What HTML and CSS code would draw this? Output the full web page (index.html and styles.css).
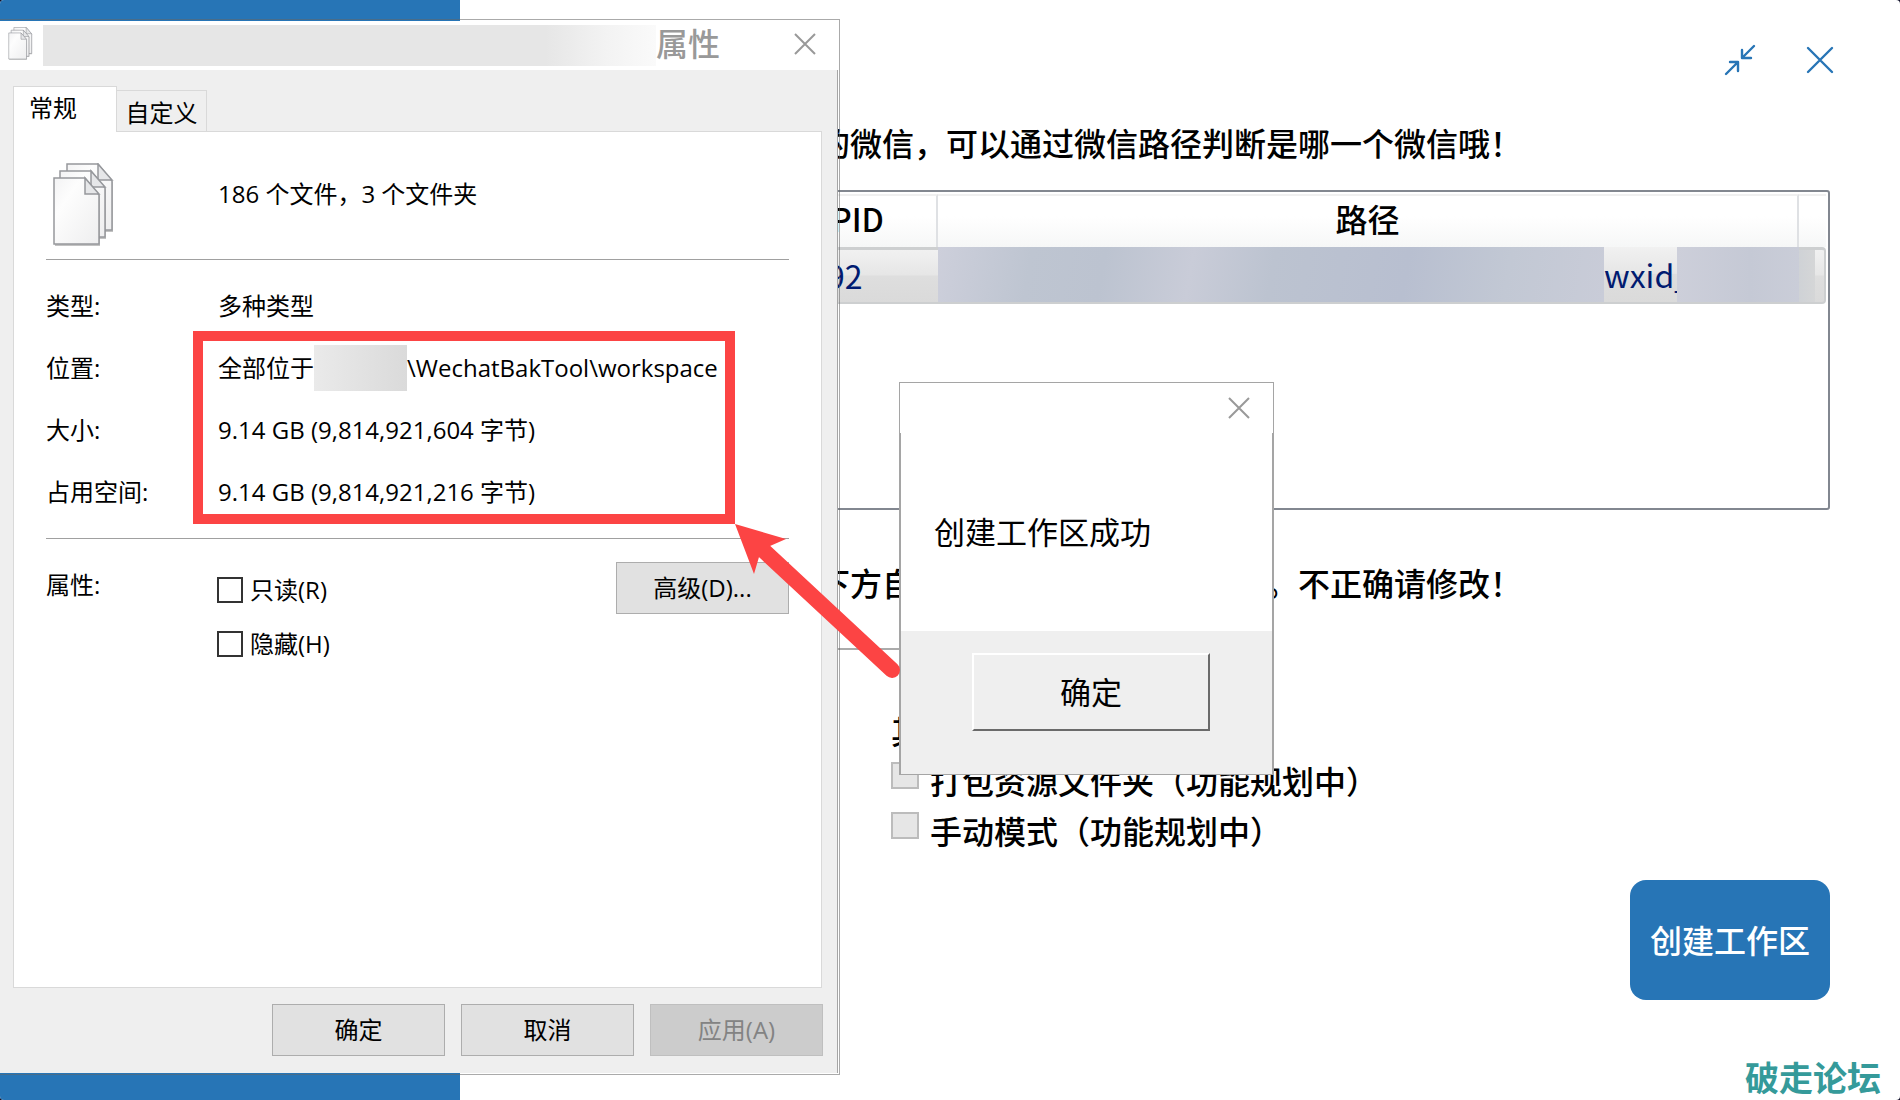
FILE: index.html
```html
<!DOCTYPE html>
<html lang="zh-CN">
<head>
    <meta charset="UTF-8">
    <meta name="viewport" content="width=device-width, initial-scale=1.0">
    <title>创建工作区</title>
    <link rel="stylesheet" href="styles.css">
</head>
<body>
    <div class="app">
        <aside class="sidebar"></aside>
        <main class="main">
            <div class="window-tools">
                <button type="button" class="tool-btn" aria-label="最小化">
                    <svg width="32" height="32" viewBox="0 0 32 32" fill="none" stroke="currentColor" stroke-width="2.4" stroke-linecap="round" stroke-linejoin="round">
                        <path d="M30 2 18 14M18 6v8h9M2 30 14 18M14 27v-9H6"/>
                    </svg>
                </button>
                <button type="button" class="tool-btn" aria-label="关闭">
                    <svg width="32" height="32" viewBox="0 0 32 32" fill="none" stroke="currentColor" stroke-width="2.4" stroke-linecap="round">
                        <path d="M4 4 28 28M28 4 4 28"/>
                    </svg>
                </button>
            </div>

            <p class="hint">的微信，可以通过微信路径判断是哪一个微信哦！</p>

            <div class="process-list">
                <table>
                    <thead>
                        <tr>
                            <th class="col-pid">PID</th>
                            <th>路径</th>
                            <th class="col-end"></th>
                        </tr>
                    </thead>
                    <tbody>
                        <tr>
                            <td class="col-pid">92</td>
                            <td class="path">
                                <div class="path-row">
                                    <span class="mask mask-path"></span>
                                    <span class="wxid">wxid_</span>
                                    <span class="mask mask-id"></span>
                                </div>
                            </td>
                            <td class="col-end"><span class="mask mask-end"></span></td>
                        </tr>
                    </tbody>
                </table>
            </div>

            <p class="hint hint-split"><span>下方自</span><span>。不正确请修改！</span></p>
            <input type="text" class="line-input" aria-label="路径">

            <div class="options">
                <div class="options-title">其</div>
                <label class="option"><input type="checkbox" disabled>打包资源文件夹（功能规划中）</label>
                <label class="option"><input type="checkbox" disabled>手动模式（功能规划中）</label>
            </div>

            <button type="button" class="create-btn">创建工作区</button>
        </main>
    </div>

    <!-- File properties window -->
    <section class="props">
        <header class="titlebar">
            <svg class="file-icon" width="28" height="34" viewBox="0 0 64 86">
                <use href="#files"/>
            </svg>
            <span class="title-mask"></span>
            <h1>属性</h1>
            <button type="button" class="close-btn" aria-label="关闭">
                <svg width="22" height="22" viewBox="0 0 22 22" fill="none" stroke="currentColor" stroke-width="2">
                    <path d="M1 1 21 21M21 1 1 21"/>
                </svg>
            </button>
        </header>
        <div class="props-body">
            <nav class="tabs">
                <button type="button" class="tab active">常规</button>
                <button type="button" class="tab">自定义</button>
            </nav>
            <div class="panel">
                <div class="summary">
                    <svg width="64" height="86" viewBox="0 0 64 86">
                        <defs>
                            <linearGradient id="paper" x1="0" y1="0" x2="1" y2="1">
                                <stop offset="0" stop-color="#f3f3f4"/>
                                <stop offset="0.3" stop-color="#fdfdfd"/>
                                <stop offset="1" stop-color="#eeeeef"/>
                            </linearGradient>
                            <g id="sheet">
                                <path d="M2 16h31l14 17v50H2z" fill="#777" opacity=".45"/>
                                <path d="M1 15h31l14 17v49H1z" fill="url(#paper)" stroke="#96989c" stroke-width="1.5"/>
                                <path d="M32 15v16h14z" fill="#e6e7e9" stroke="#96989c" stroke-width="1.5"/>
                            </g>
                            <g id="files">
                                <use href="#sheet" x="13" y="-14"/>
                                <use href="#sheet" x="6" y="-7"/>
                                <use href="#sheet"/>
                            </g>
                        </defs>
                        <use href="#files"/>
                    </svg>
                    <span>186 个文件，3 个文件夹</span>
                </div>
                <dl class="details">
                    <dt>类型:</dt>
                    <dd>多种类型</dd>
                    <dt>位置:</dt>
                    <dd>全部位于<span class="location-mask"></span>\WechatBakTool\workspace</dd>
                    <dt>大小:</dt>
                    <dd>9.14 GB (9,814,921,604 字节)</dd>
                    <dt>占用空间:</dt>
                    <dd>9.14 GB (9,814,921,216 字节)</dd>
                </dl>
                <div class="attributes">
                    <div class="attr-name">属性:</div>
                    <div class="attr-checks">
                        <label><input type="checkbox">只读(R)</label>
                        <label><input type="checkbox">隐藏(H)</label>
                    </div>
                    <button type="button" class="win-btn">高级(D)...</button>
                </div>
            </div>
            <footer class="props-actions">
                <button type="button" class="win-btn">确定</button>
                <button type="button" class="win-btn">取消</button>
                <button type="button" class="win-btn" disabled>应用(A)</button>
            </footer>
        </div>
    </section>

    <!-- Message box -->
    <section class="message" role="dialog">
        <header class="message-bar">
            <button type="button" class="close-btn" aria-label="关闭">
                <svg width="22" height="22" viewBox="0 0 22 22" fill="none" stroke="currentColor" stroke-width="2">
                    <path d="M1 1 21 21M21 1 1 21"/>
                </svg>
            </button>
        </header>
        <p class="message-text">创建工作区成功</p>
        <footer class="message-actions">
            <button type="button" class="message-btn">确定</button>
        </footer>
    </section>

    <!-- Annotations -->
    <div class="highlight"></div>
    <svg class="arrow" width="170" height="160" viewBox="0 0 170 160">
        <path d="M28 26 157 146" stroke="#fc4444" stroke-width="16" stroke-linecap="round"/>
        <path d="M0 0 51 15 35 22 24 33 19 50z" fill="#fc4444"/>
    </svg>
    <div class="watermark">破走论坛</div>
</body>
</html>
```
FILE: styles.css
```css
* {
    box-sizing: border-box;
}
body {
    margin: 0;
    position: relative;
    min-height: 100vh;
    background-color: #10102a;
    color: #000;
    font-family: "Noto Sans CJK SC", sans-serif;
    font-size: 32px;
    line-height: 40px;
    overflow: hidden;
}
button,
input {
    font: inherit;
    color: inherit;
    margin: 0;
}
button {
    padding: 0;
    border: none;
    background: none;
}
svg {
    display: block;
}
p,
h1,
dl,
dd {
    margin: 0;
}

/* Main window */
.app {
    display: flex;
    min-height: 100vh;
    background-color: #fff;
    border-radius: 4px;
    font-weight: 500;
    overflow: hidden;
}
.sidebar {
    flex: 0 0 460px;
    background-color: #2775b6;
}
.main {
    flex: 1;
    display: flex;
    flex-direction: column;
    padding: 0 70px 100px 358px;
}
.window-tools {
    display: flex;
    justify-content: flex-end;
    gap: 48px;
    height: 122px;
    padding-top: 44px;
    margin-right: -6px;
}
.tool-btn {
    width: 32px;
    height: 32px;
    color: #2775b6;
}
.hint {
    white-space: nowrap;
}
.hint-split {
    display: flex;
    gap: 352px;
    margin-top: 52px;
}
.process-list {
    height: 320px;
    margin-top: 28px;
    padding: 2px;
    border: 2px solid #828790;
    border-radius: 3px;
}
.process-list table {
    width: 100%;
    border-spacing: 0;
    table-layout: fixed;
}
.process-list th {
    height: 53px;
    padding: 0 0 8px;
    font-weight: 500;
    border-top: 2px solid #f0f0f0;
    border-right: 2px solid #dfe1e4;
    background: linear-gradient(#fff 40%, #f6f7f7);
}
.process-list th.col-end {
    border-right: none;
}
.process-list td {
    height: 57px;
    padding: 0;
    color: #001a70;
    font-weight: 400;
    border-top: 3px solid #cdcfd0;
    border-bottom: 2px solid #cdcfd0;
    background: linear-gradient(#f1f1f1, #e6e6e6 48%, #dedede 50%, #dadada);
}
.process-list td.path {
    border-top: none;
}
.process-list .col-pid {
    width: 116px;
    padding-left: 9px;
    text-align: left;
}
.process-list td.col-pid {
    padding: 0 0 2px 5px;
}
.process-list .col-end {
    width: 27px;
}
.process-list td.col-end {
    border-right: 2px solid #cdcfd0;
    border-radius: 0 4px 4px 0;
}
.path-row {
    display: flex;
    height: 55px;
    line-height: 54px;
}
.mask {
    display: block;
}
.mask-path {
    flex: 1;
    background: linear-gradient(100deg, #cdcfdb, #bec5d1 14%, #bcc3d0 25%, #c9ccd8 38%, #bcc3d0 50%, #b8bfd0 70%, #c2c8d4 85%, #c9ccd8);
}
.wxid {
    width: 73px;
}
.mask-id {
    width: 122px;
    background: linear-gradient(90deg, #cdcfda, #c5c9d5 60%, #cacdd8);
}
.mask-end {
    width: 16px;
    height: 52px;
    background: linear-gradient(90deg, #cfd2d6, #d5d6d7);
}
.line-input {
    width: 200px;
    height: 48px;
    border: none;
    border-bottom: 2px solid #ababab;
    background: none;
}
.options {
    margin: 60px 0 0 73px;
}
.options-title {
    height: 50px;
}
.option {
    display: flex;
    gap: 11px;
    height: 50px;
    white-space: nowrap;
}
.option input {
    appearance: none;
    width: 28px;
    height: 27px;
    margin-top: 2px;
    border: 2px solid #bcbcbc;
    background-color: #e6e6e6;
}
.create-btn {
    width: 200px;
    height: 120px;
    margin-top: auto;
    align-self: flex-end;
    padding-bottom: 2px;
    border-radius: 16px;
    background-color: #2775b6;
    color: #fff;
}

/* File properties window */
.props {
    position: absolute;
    top: 19px;
    left: 0;
    width: 840px;
    padding: 1px 1px 1px 0;
    border: 1px solid rgba(100, 100, 100, 0.55);
    border-left: none;
    font-family: "Open Sans", "Noto Sans CJK SC", sans-serif;
    font-size: 24px;
}
.titlebar {
    display: flex;
    align-items: center;
    height: 49px;
    padding: 0 22px 4px 7px;
    background-color: #fff;
    color: #999;
}
.title-mask {
    width: 613px;
    height: 41px;
    margin: 4px 0 0 8px;
    background: linear-gradient(90deg, #e6e6e6 82%, #f3f3f3 92%, #fafafa);
}
.titlebar h1 {
    font-size: 32px;
    font-weight: 500;
}
.close-btn {
    margin-left: auto;
    color: #999;
}
.props-body {
    height: 1003px;
    padding: 16px 14px 0 13px;
    background-color: #efefef;
    border-right: 1px solid #a5a5a5;
}
.tabs {
    display: flex;
    align-items: flex-end;
    height: 45px;
}
.tab {
    height: 41px;
    width: 90px;
    padding-top: 2px;
    border: 1px solid #d9d9d9;
    border-left: none;
    border-bottom: none;
}
.tab.active {
    position: relative;
    width: 104px;
    height: 46px;
    margin-bottom: -1px;
    padding: 0 24px 4px 0;
    border-left: 1px solid #d9d9d9;
    background-color: #fff;
}
.panel {
    height: 857px;
    margin-right: 1px;
    padding: 0 32px;
    border: 1px solid #d9d9d9;
    background-color: #fff;
}
.summary {
    display: flex;
    gap: 101px;
    height: 128px;
    padding: 31px 0 0 7px;
    border-bottom: 1px solid #a0a0a0;
    line-height: 62px;
}
.details {
    display: grid;
    grid-template-columns: 172px 1fr;
    padding: 15px 0;
    border-bottom: 1px solid #a0a0a0;
    line-height: 62px;
    white-space: nowrap;
}
.details dd {
    display: flex;
    align-items: center;
}
.location-mask {
    width: 93px;
    height: 46px;
    background: linear-gradient(90deg, #eaeaea, #dadada);
}
.attributes {
    display: flex;
    align-items: flex-start;
    padding-top: 23px;
}
.attr-name {
    width: 171px;
    padding-top: 3px;
}
.attr-checks {
    display: flex;
    flex-direction: column;
    gap: 14px;
    flex: 1;
    padding-top: 8px;
}
.attr-checks label {
    display: flex;
    align-items: center;
    gap: 7px;
}
.attr-checks input {
    appearance: none;
    width: 26px;
    height: 26px;
    border: 2px solid #333;
    background-color: #fff;
}
.win-btn {
    width: 173px;
    height: 52px;
    border: 1px solid #adadad;
    background-color: #e1e1e1;
}
.win-btn:disabled {
    border-color: #bfbfbf;
    background-color: #ccc;
    color: #838383;
}
.props-actions {
    display: flex;
    justify-content: flex-end;
    gap: 16px;
    padding-top: 16px;
}

/* Message box */
.message {
    position: absolute;
    top: 382px;
    left: 899px;
    width: 375px;
    border: 1px solid #a5a5a5;
    background-color: #fff;
    font-size: 31px;
}
.message-bar {
    display: flex;
    align-items: center;
    height: 50px;
    padding-right: 23px;
}
.message-text {
    height: 198px;
    padding: 78px 0 0 33px;
    border: solid #a5a5a5;
    border-width: 0 1px;
}
.message-actions {
    height: 143px;
    padding: 22px 0 0 71px;
    border: solid #a5a5a5;
    border-width: 0 1px;
    background-color: #efefef;
}
.message-btn {
    width: 238px;
    height: 78px;
    padding-bottom: 2px;
    border: 2px solid;
    border-color: #fff #6a6a6a #6a6a6a #fff;
    background-color: #efefef;
}

/* Annotations */
.highlight {
    position: absolute;
    top: 331px;
    left: 193px;
    width: 542px;
    height: 193px;
    border: 10px solid #fc4444;
}
.arrow {
    position: absolute;
    top: 524px;
    left: 735px;
}
.watermark {
    position: absolute;
    right: 19px;
    bottom: 3px;
    color: #359a9a;
    font-size: 34px;
    font-weight: bold;
}
```
